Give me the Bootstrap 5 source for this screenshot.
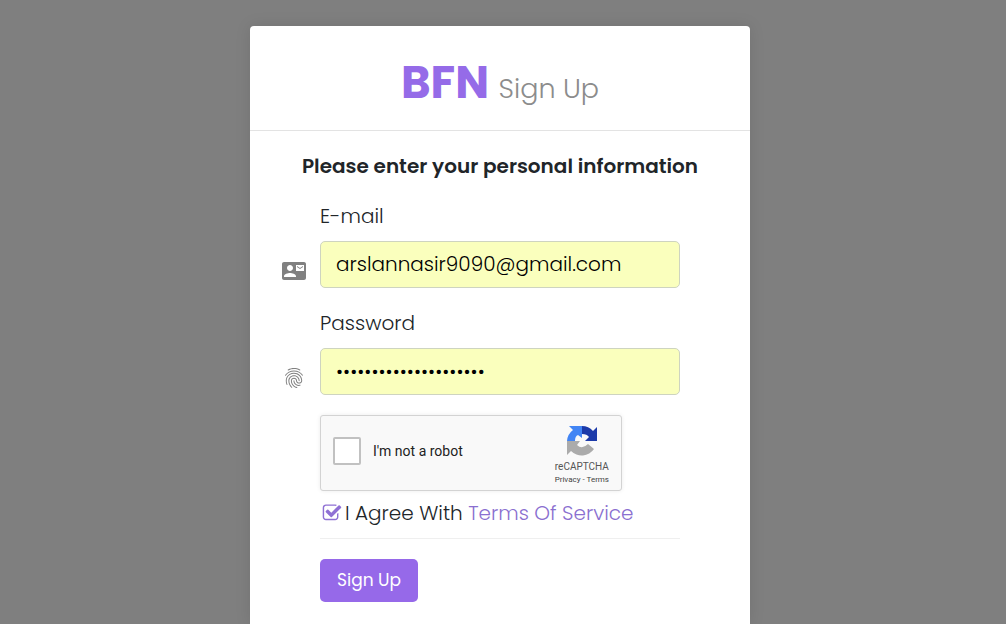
<!DOCTYPE html>
<html lang="en">
<head>
<meta charset="utf-8">
<meta name="viewport" content="width=device-width, initial-scale=1">
<title>BFN Sign Up</title>
<link href="https://cdn.jsdelivr.net/npm/bootstrap@5.3.0/dist/css/bootstrap.min.css" rel="stylesheet">
<style>
  :root { --brand: #956be8; --ink: #212529; }
  body { background: #7f7f7f; color: var(--ink); font-family: Poppins, Inter, sans-serif; font-size: 20px; line-height: 30px; font-weight: 300; }
  .page { padding: 26px 6px 0 0; }
  .sheet { width: 100%; max-width: 500px; background: #fff; border-radius: 4px 4px 0 0; box-shadow: 0 0 16px rgba(0,0,0,.1); }
  .sheet-head { height: 105px; padding-top: 16px; border-bottom: 1px solid #e3e3e3; }
  .sheet-head h1 { font-size: 27px; line-height: 54px; font-weight: 300; color: #8c8c8c; }
  .sheet-head strong { font-size: 45px; font-weight: 700; color: var(--brand); }
  .sheet-body { padding: 20px 70px 22px; }
  .lead-in { font-size: 20px; line-height: 30px; font-weight: 600; margin: 0 -30px 20px; }
  .field { display: grid; grid-template-columns: 24px 1fr; column-gap: 14px; margin: 0 0 20px -38px; }
  .field label { grid-column: 2; margin-bottom: 10px; }
  .field svg { align-self: center; margin-top: 12px; fill: #808080; }
  .field .form-control { height: 47px; padding: 0 15px 2px; font-size: 20px; font-weight: 300; color: #000; background: #faffbd; border: 1px solid #ced4c0; border-radius: 5px; }
  .field input[type=password] { font-family: Roboto, sans-serif; font-size: 21px; font-weight: 400; padding-bottom: 0; }
  .captcha { width: 302px; max-width: 100%; height: 76px; padding: 0 12px 4px; background: #f9f9f9; border: 1px solid #d3d3d3; border-radius: 3px; box-shadow: 0 0 4px rgba(0,0,0,.08); font-family: Roboto, sans-serif; font-weight: 400; color: #222; }
  .captcha input { appearance: none; width: 28px; height: 28px; margin: 0 12px 0 0; border: 2px solid #c1c1c1; border-radius: 2px; background: #fff; }
  .captcha label { font-size: 14px; line-height: 18px; }
  .captcha-brand { font-size: 10px; line-height: 12px; color: #555; padding-top: 10px; }
  .captcha-brand small { font-size: 8px; line-height: 14px; }
  .captcha-brand a { color: #444; }
  .agree { padding: 7px 0 10px; border-bottom: 1px solid #efefef; margin-bottom: 20px; }
  .agree input { appearance: none; width: 20px; height: 20px; margin: 0 3px 0 2px; background: url("data:image/svg+xml,%3Csvg xmlns='http://www.w3.org/2000/svg' viewBox='0 0 1792 1792'%3E%3Cpath fill='%238f70d4' d='M1472 930v318q0 119-84.5 203.5t-203.5 84.5h-832q-119 0-203.5-84.5t-84.5-203.5v-832q0-119 84.5-203.5t203.5-84.5h832q63 0 117 25 15 7 18 23 3 17-9 29l-49 49q-10 10-23 10-3 0-9-2-23-6-45-6h-832q-66 0-113 47t-47 113v832q0 66 47 113t113 47h832q66 0 113-47t47-113v-254q0-13 9-22l64-64q10-10 23-10 6 0 12 3 20 8 20 29zm231-489l-814 814q-24 24-57 24t-57-24l-430-430q-24-24-24-57t24-57l110-110q24-24 57-24t57 24l263 263 647-647q24-24 57-24t57 24l110 110q24 24 24 57t-24 57z'/%3E%3C/svg%3E") center/contain no-repeat; }
  .agree a { color: #8a6fd0; }
  .btn-brand, .btn-brand:hover { background: #9669e9; color: #fff; font-size: 17px; line-height: 25px; padding: 9px 17px; border: 0; border-radius: 5px; }
</style>
</head>
<body>
<main class="page d-flex justify-content-center min-vh-100">
  <div class="sheet">
    <header class="sheet-head d-flex justify-content-center align-items-center">
      <h1 class="m-0"><strong>BFN </strong>Sign Up</h1>
    </header>
    <form class="sheet-body">
      <h2 class="lead-in text-center">Please enter your personal information</h2>
      <div class="field">
        <label for="email">E-mail</label>
        <svg width="24" height="24" viewBox="0 0 24 24" aria-hidden="true"><path d="M21 8V7l-3 2-3-2v1l3 2 3-2zm1-5H2C.9 3 0 3.900 0 5v14c0 1.100.9 2 2 2h20c1.100 0 1.990-.9 1.990-2L24 5c0-1.100-.9-2-2-2zM8 6c1.660 0 3 1.340 3 3s-1.340 3-3 3-3-1.340-3-3 1.340-3 3-3zm6 12H2v-1c0-2 4-3.100 6-3.100s6 1.100 6 3.100v1zm8-6h-8V6h8v6z"/></svg>
        <input class="form-control" id="email" type="email" value="arslannasir9090@gmail.com">
      </div>
      <div class="field">
        <label for="password">Password</label>
        <svg width="24" height="24" viewBox="0 0 24 24" aria-hidden="true"><path d="M17.810 4.470c-.08 0-.16-.02-.23-.06C15.660 3.420 14 3 12.010 3c-1.980 0-3.860.47-5.570 1.410-.24.13-.54.04-.68-.2-.13-.24-.04-.55.2-.68C7.820 2.520 9.860 2 12.010 2c2.130 0 3.990.47 6.030 1.520.25.13.34.43.21.67-.09.18-.26.28-.44.28zM3.500 9.720c-.1 0-.2-.03-.29-.09-.23-.16-.28-.47-.12-.7.99-1.400 2.250-2.500 3.750-3.270C9.980 4.040 14 4.030 17.150 5.650c1.500.77 2.760 1.860 3.750 3.250.16.22.11.54-.12.7-.23.16-.54.11-.7-.12-.9-1.260-2.040-2.250-3.390-2.940-2.870-1.470-6.540-1.470-9.400.01-1.360.7-2.500 1.700-3.400 2.960-.08.14-.23.21-.39.21zm6.250 12.070c-.13 0-.26-.05-.35-.15-.87-.87-1.340-1.430-2.010-2.640-.69-1.230-1.050-2.730-1.050-4.340 0-2.970 2.540-5.390 5.660-5.390s5.660 2.420 5.660 5.390c0 .28-.22.5-.5.5s-.5-.22-.5-.5c0-2.420-2.090-4.390-4.660-4.390-2.570 0-4.660 1.970-4.660 4.390 0 1.440.32 2.770.93 3.850.64 1.150 1.080 1.640 1.850 2.420.19.2.19.51 0 .71-.11.1-.24.15-.37.15zm7.170-1.850c-1.190 0-2.240-.3-3.100-.89-1.490-1.010-2.380-2.650-2.380-4.390 0-.28.22-.5.5-.5s.5.22.5.5c0 1.410.72 2.740 1.940 3.560.71.48 1.540.71 2.540.71.24 0 .64-.03 1.040-.1.27-.05.53.13.58.41.05.27-.13.53-.41.58-.57.11-1.070.12-1.210.12zM14.910 22c-.04 0-.09-.01-.13-.02-1.590-.44-2.630-1.030-3.720-2.100-1.400-1.390-2.170-3.240-2.170-5.220 0-1.620 1.380-2.940 3.080-2.940 1.700 0 3.080 1.320 3.080 2.940 0 1.070.93 1.940 2.080 1.940s2.080-.87 2.080-1.940c0-3.770-3.250-6.830-7.250-6.830-2.840 0-5.440 1.580-6.610 4.030-.39.81-.59 1.760-.59 2.800 0 .78.07 2.010.67 3.610.1.26-.03.55-.29.64-.26.1-.55-.04-.64-.29-.49-1.310-.73-2.610-.73-3.960 0-1.200.23-2.290.68-3.240 1.330-2.790 4.280-4.600 7.510-4.600 4.550 0 8.250 3.510 8.250 7.830 0 1.620-1.380 2.940-3.080 2.940s-3.080-1.320-3.080-2.940c0-1.070-.93-1.940-2.080-1.940s-2.080.87-2.080 1.940c0 1.710.66 3.310 1.870 4.510.95.94 1.860 1.460 3.270 1.850.27.07.42.35.35.61-.05.23-.26.38-.47.38z"/></svg>
        <input class="form-control" id="password" type="password" value="correcthorsebattery21">
      </div>
      <div class="captcha d-flex align-items-center">
        <input type="checkbox" id="robot" class="flex-shrink-0">
        <label for="robot">I'm not a robot</label>
        <div class="captcha-brand ms-auto d-flex flex-column align-items-center">
          <svg width="32" height="32" viewBox="0 0 32 32" aria-hidden="true">
            <path fill="#1c3aa9" d="M31 16V2l-4 4A15 15 0 0 0 16 1v8q5 0 7 3l-4 4z"/>
            <path fill="#4285f4" d="M16 1H3l4 4A15 15 0 0 0 1 16h8q0-5 3-6l4 3z"/>
            <path fill="#ababab" d="M1 16v14l4-4a15 15 0 0 0 23-2l-6-5q-6 6-11 1l3-4z"/>
          </svg>
          <span class="mt-1">reCAPTCHA</span>
          <small><a href="#" class="text-decoration-none">Privacy</a> - <a href="#" class="text-decoration-none">Terms</a></small>
        </div>
      </div>
      <div class="agree d-flex align-items-center">
        <input type="checkbox" id="agree" checked>
        <label for="agree">I Agree With <a href="#" class="text-decoration-none">Terms Of Service</a></label>
      </div>
      <button type="submit" class="btn btn-brand">Sign Up</button>
    </form>
  </div>
</main>
<script src="https://cdn.jsdelivr.net/npm/bootstrap@5.3.0/dist/js/bootstrap.bundle.min.js"></script>
</body>
</html>
